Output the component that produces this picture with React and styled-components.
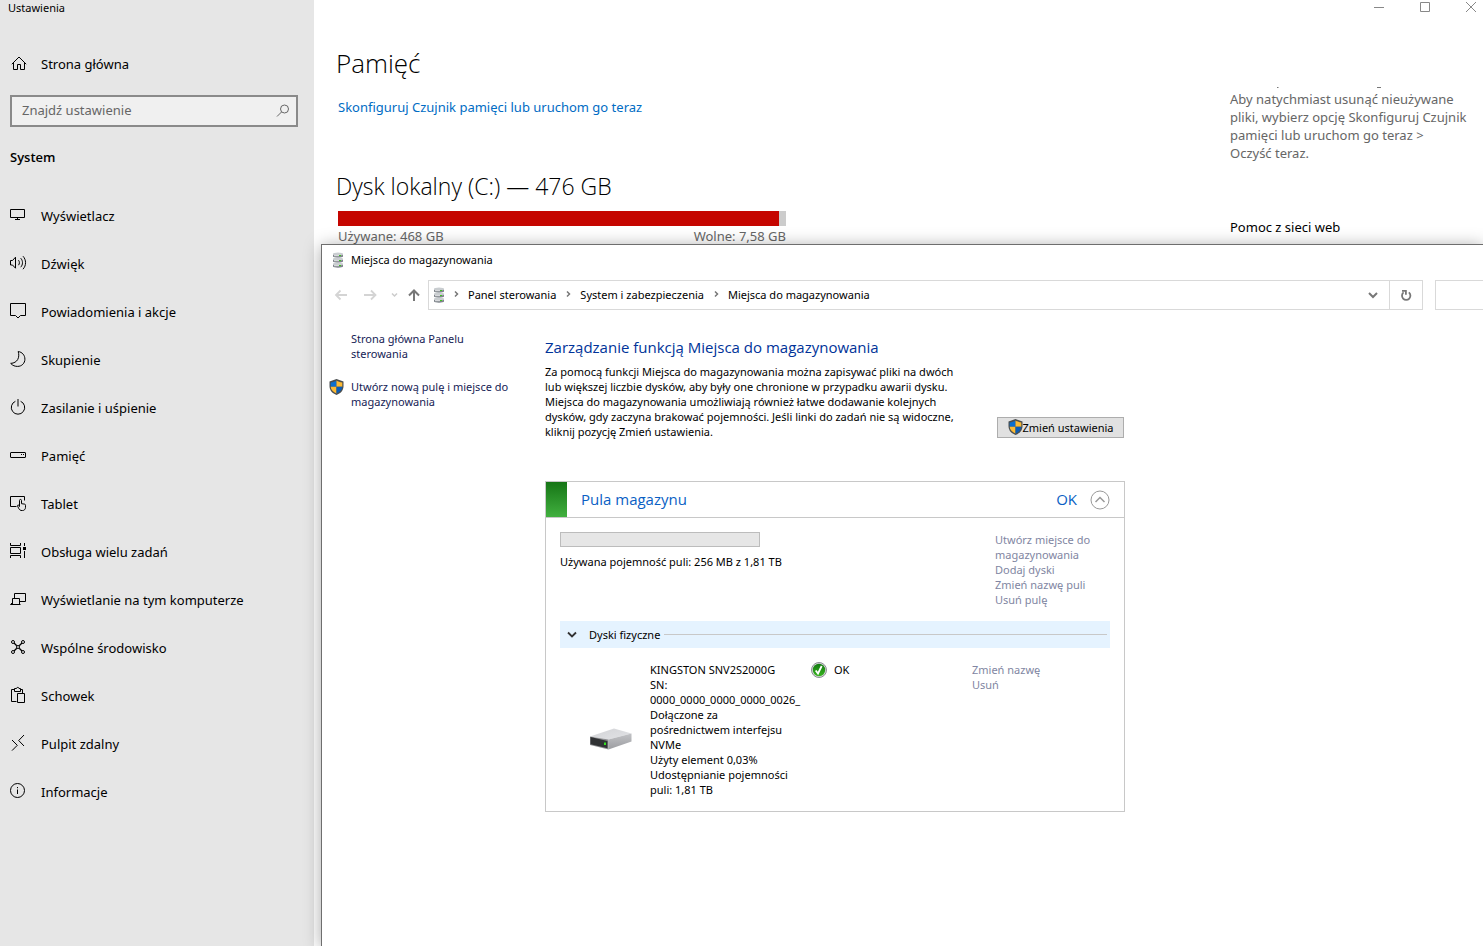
import React from 'react'
import styled, { createGlobalStyle } from 'styled-components'

const GlobalStyle = createGlobalStyle`
  * {
    box-sizing: border-box;
  }

  body {
    margin: 0;
    background: #fff;
    color: #000;
    font-family: 'Noto Sans', 'Open Sans', sans-serif;
    font-size: 12px;
    overflow: hidden;
  }

  h1, h2, h3, p, ul {
    margin: 0;
    padding: 0;
    font-weight: 400;
  }

  h1, h2 {
    font-family: 'Open Sans', 'Noto Sans', sans-serif;
  }

  ul {
    list-style: none;
  }

  a {
    color: inherit;
    text-decoration: none;
  }

  button {
    font: inherit;
    color: inherit;
    padding: 0;
    border: 0;
    background: none;
  }

  svg {
    display: block;
    flex: none;
  }
`

const Desktop = styled.div`
  position: relative;
  display: grid;
  grid-template-columns: 314px 1fr;
  min-height: 100vh;
  overflow: hidden;
`

/* Settings app */

const Sidebar = styled.aside`
  background: #e6e6e6;
  padding: 0 16px 0 10px;
`

const AppTitle = styled.div`
  height: 16px;
  line-height: 16px;
  margin: 0 0 24px -2px;
  font-size: 11px;
`

const NavLink = styled.a`
  display: flex;
  align-items: center;
  gap: 13px;
  height: 48px;
  font-size: 13px;

  svg {
    margin-bottom: 4px;
  }
`

const SearchBox = styled.label`
  display: flex;
  align-items: center;
  height: 32px;
  margin-top: 7px;
  padding: 0 6px 0 10px;
  border: 2px solid #8a8a8a;
  background: #f0f0f0;

  input {
    flex: 1;
    min-width: 0;
    padding: 0 0 2px;
    border: 0;
    outline: 0;
    background: none;
    font: inherit;
    font-size: 13px;
  }

  input::placeholder {
    color: #666;
    opacity: 1;
  }
`

const Category = styled.h2`
  margin: 20px 0 25px;
  font-size: 13px;
  line-height: 20px;
  font-weight: 600;
`

const SettingsMain = styled.main`
  display: grid;
  grid-template-columns: 1fr 253px;
  grid-template-rows: 16px auto;
`

const WindowControls = styled.div`
  grid-column: 1 / -1;
  display: flex;
  justify-content: flex-end;
  gap: 36px;
  padding-right: 7px;

  button {
    display: flex;
    align-items: center;
    height: 14px;
  }
`

const StoragePane = styled.section`
  padding: 28px 22px 0;
`

const PageHeading = styled.h1`
  font-size: 26px;
  line-height: 38px;
  font-weight: 300;
`

const SenseLink = styled.a`
  display: block;
  margin: 15px 0 0 2px;
  font-size: 13px;
  line-height: 20px;
  color: #006cc4;
`

const DiskHeading = styled.h2`
  margin-top: 50px;
  font-size: 23px;
  line-height: 38px;
  font-weight: 300;
`

const DiskUsage = styled.div`
  width: 448px;
  margin: 6px 0 0 2px;
`

const DiskBar = styled.div`
  height: 15px;
  background: #ccc;

  div {
    height: 100%;
    background: #c50500;
  }
`

const DiskLegend = styled.div`
  display: flex;
  justify-content: space-between;
  font-size: 13px;
  line-height: 20px;
  color: #666;
`

const HelpPane = styled.aside`
  padding-top: 70px;
  font-size: 13px;

  p {
    margin-top: 2px;
    padding-right: 12px;
    line-height: 18px;
    color: #666;
  }

  h3 {
    margin-top: 55px;
    font-size: 13px;
    line-height: 20px;
  }
`

/* Storage Spaces window */

const Window = styled.section`
  position: absolute;
  top: 244px;
  left: 321px;
  right: 0;
  bottom: 0;
  display: flex;
  flex-direction: column;
  border: solid #6e6e6e;
  border-width: 1px 0 0 1px;
  background: #fff;
  box-shadow: 0 2px 16px rgba(0, 0, 0, 0.35);
  font-size: 11px;
  line-height: 15px;
`

const TitleBar = styled.header`
  display: flex;
  align-items: center;
  gap: 7px;
  height: 29px;
  padding-left: 10px;
`

const Toolbar = styled.div`
  display: flex;
  align-items: center;
  height: 30px;
  margin-top: 6px;
`

const HistoryButtons = styled.div`
  display: flex;
  align-items: center;
  gap: 13px;
  width: 106px;
  padding-left: 12px;

  button:nth-child(3) {
    margin: 0 -5px 0 -1px;
  }
`

const AddressBar = styled.nav`
  flex: 1;
  display: flex;
  align-items: center;
  height: 30px;
  padding-left: 4px;
  border: 1px solid #d9d9d9;

  ol {
    display: flex;
    align-items: center;
    flex: 1;
    margin: 0;
    padding: 0 0 2px;
    list-style: none;
  }

  li {
    display: flex;
    align-items: center;
    gap: 9px;
    margin-left: 9px;
  }

  li + li {
    margin-left: 10px;
  }
`

const AddressButton = styled.button`
  display: flex;
  align-items: center;
  justify-content: center;
  width: 33px;
  height: 28px;
  border-left: ${(props) => (props.$divided ? '1px solid #d9d9d9' : '0')};
`

const WindowSearch = styled.input`
  width: 48px;
  height: 30px;
  margin-left: 12px;
  border: 1px solid #d9d9d9;
  border-right: 0;
  border-radius: 0;
  outline: 0;
`

const WindowBody = styled.div`
  display: grid;
  grid-template-columns: 223px minmax(0, 580px);
  padding-top: 21px;
`

const TaskLinks = styled.ul`
  padding-left: 7px;
  color: #151c55;

  li {
    display: grid;
    grid-template-columns: 15px 170px;
    gap: 7px;
    margin-bottom: 18px;
  }

  a {
    grid-column: 2;
  }
`

const PaneHeading = styled.h1`
  margin-top: 5px;
  font-size: 15px;
  line-height: 22px;
  color: #039;
`

const Intro = styled.div`
  display: flex;
  justify-content: space-between;
  align-items: flex-end;
  margin-top: 6px;

  p {
    width: 421px;
  }
`

const SettingsButton = styled.button`
  display: flex;
  align-items: center;
  justify-content: center;
  width: 127px;
  height: 21px;
  margin: 0 1px 1px 0;
  border: 1px solid #adadad;
  background: #e1e1e1;

  svg {
    margin-bottom: 2px;
  }
`

const Pool = styled.article`
  margin-top: 42px;
  border: 1px solid #c8c8c8;
`

const PoolHeader = styled.header`
  display: flex;
  align-items: center;
  height: 36px;
  padding-right: 14px;
  border-bottom: 1px solid #c8c8c8;
  font-family: 'Open Sans', 'Noto Sans', sans-serif;
  font-size: 15px;
  color: #0a5fc4;

  &::before {
    content: '';
    width: 21px;
    height: 35px;
    margin-right: 14px;
    background: linear-gradient(#167516, #41b03f);
  }

  h2 {
    flex: 1;
    font-size: 15px;
  }

  button {
    margin-left: 13px;
  }
`

const PoolBody = styled.div`
  padding: 14px;
`

const PoolSummary = styled.div`
  display: grid;
  grid-template-columns: 1fr 115px;
  min-height: 89px;
`

const CapacityBar = styled.div`
  width: 200px;
  height: 15px;
  margin-bottom: 7px;
  border: 1px solid #bcbcbc;
  background: #e6e6e6;
`

const ActionList = styled.ul`
  color: #8186a2;
`

const SectionButton = styled.button`
  display: flex;
  align-items: center;
  width: 100%;
  height: 27px;
  padding: 0 3px 0 7px;
  background: #e5f3ff;

  span {
    margin: 0 4px 0 12px;
  }

  &::after {
    content: '';
    flex: 1;
    height: 1px;
    background: #c8c8c8;
  }
`

const Disk = styled.div`
  display: grid;
  grid-template-columns: 60px 144px 144px 1fr;
  column-gap: 17px;
  margin-top: 14px;
  padding-left: 13px;

  > svg {
    align-self: center;
    justify-self: end;
    margin-top: 18px;
  }
`

const DiskStatus = styled.div`
  display: flex;
  align-items: flex-start;
  gap: 7px;
`

function Icon({ children, width = 18, height = 18, color = '#000', stroke = 1 }) {
  return (
    <svg
      width={width}
      height={height}
      viewBox={`0 0 ${width} ${height}`}
      fill="none"
      stroke={color}
      strokeWidth={stroke}
      aria-hidden="true"
    >
      {children}
    </svg>
  )
}

const homeIcon = (
  <Icon>
    <path d="M1.8 11.2 9 4l7.2 7.2M3.5 9.8v6.7h4v-5h3v5h4V9.8" />
  </Icon>
)

const navItems = [
  {
    label: 'Wyświetlacz',
    icon: <path d="M.5 4.5h14v8H.5zM7.5 12.5v2M5 14.5h5" />,
  },
  {
    label: 'Dźwięk',
    icon: (
      <path d="M.5 7.5h2l3-3.3v11l-3-3.200h-2zM8.5 7.2c1.2 1.500 1.2 3.500 0 5M10.700 5.2c2.4 2.600 2.4 6.400 0 9M13 3.2c3.4 3.700 3.4 9.300 0 13" />
    ),
  },
  {
    label: 'Powiadomienia i akcje',
    icon: <path d="M.5 2.5h15v12h-5L8 17l-2.5-2.5h-5z" />,
  },
  {
    label: 'Skupienie',
    icon: <path d="M8.2 2.5C10 8.5 7.5 14 .7 14.4 2.7 16.7 5 17.4 7.6 17.4c4.2 0 7.3-3.2 7.3-7.2 0-3.9-2.6-7.1-6.7-7.7z" />,
  },
  {
    label: 'Zasilanie i uśpienie',
    icon: <path d="M8 2v7.500M5.400 4.300a6.700 6.700 0 1 0 5.200 0" />,
  },
  {
    label: 'Pamięć',
    icon: (
      <>
        <rect x="0.5" y="7.5" width="15" height="5" rx="0.5" />
        <path d="M11 9.500h1M13 9.500h1" />
      </>
    ),
  },
  {
    label: 'Tablet',
    icon: (
      <>
        <path d="M6.500 13.500h-6v-10h14v4" />
        <path d="M9.500 13.500V7.400c0-1.300 2-1.300 2 0v3.300l3 .4c.7.1 1 .5 1 1.200v2c0 2-1.300 3.300-3.200 3.300-2 0-3-.9-3.700-2.400l-1-2.100c-.5-1.200.9-1.600 1.900-.1z" />
      </>
    ),
  },
  {
    label: 'Obsługa wielu zadań',
    icon: (
      <>
        <path d="M.5 2v2.500h10V2M.5 6.500h10v6H.5zM.5 17v-2.500h10V17M14.500 2v3M14.500 10v7" />
        <path d="M14.500 6v3" strokeWidth="3" />
      </>
    ),
  },
  {
    label: 'Wyświetlanie na tym komputerze',
    icon: <path d="M4.500 9V4.500h11v8H10M2.500 15V9.500h7V15M.5 15.500h10M.5 15.500l2-2" />,
  },
  {
    label: 'Wspólne środowisko',
    icon: (
      <>
        <path d="m4 6 2.800 2.800M12 6 9.200 8.800M4 14l2.800-2.800M12 14l-2.800-2.800" strokeWidth="1.300" />
        <circle cx="3" cy="5" r="1.500" />
        <circle cx="13" cy="5" r="1.500" />
        <circle cx="8" cy="10" r="1.500" />
        <circle cx="3" cy="15" r="1.500" />
        <circle cx="13" cy="15" r="1.500" />
      </>
    ),
  },
  {
    label: 'Schowek',
    icon: (
      <path d="M6.500 16.500h-5v-12h3M10 4.500h2.500V8M4.500 6.500v-3h2c0-1.500 2.500-1.500 2.500 0h1.500v3zM7.500 8.500h7v9h-7z" />
    ),
  },
  {
    label: 'Pulpit zdalny',
    icon: <path d="m2 7 5.300 5.300L2 17.600M14 2 8.700 7.500 14 13" />,
  },
  {
    label: 'Informacje',
    icon: (
      <>
        <circle cx="7.500" cy="9.500" r="7" />
        <path d="M7.500 8.500V13M7.500 6v1.200" />
      </>
    ),
  },
]

function Shield() {
  return (
    <svg width="15" height="16" viewBox="0 0 15 16" aria-hidden="true">
      <path d="M7.500 0 14.500 2.500V7c0 4.500-3 7.500-7 9-4-1.500-7-4.500-7-9V2.500z" fill="#4b4f50" />
      <path d="M7.500 1.500v6.200H1.700V3.400C4 3.200 6 2.500 7.500 1.500z" fill="#0b6fd0" />
      <path d="M7.500 1.500v6.200h5.800V3.400C11 3.200 9 2.500 7.500 1.500z" fill="#fdba33" />
      <path d="M1.700 7.700h5.800v6.800c-3.300-1.300-5.600-3.800-5.800-6.800z" fill="#fdba33" />
      <path d="M13.300 7.700H7.500v6.800c3.300-1.300 5.600-3.800 5.800-6.800z" fill="#0b5cb5" />
    </svg>
  )
}

function DiskStack() {
  return (
    <svg width="12" height="16" viewBox="0 0 12 16" aria-hidden="true">
      {[0, 5, 10].map((y) => (
        <g key={y} transform={`translate(0 ${y})`}>
          <path d="M1 2.500v2c0 1.500 10 1.500 10 0v-2z" fill="#7f848b" />
          <ellipse cx="6" cy="2" rx="5" ry="1.500" fill="#c9cdd0" />
          <path d="M2 3.700h5" stroke="#e4e6e8" />
          <rect x="7" y="3" width="2" height="1" fill="#3cc51f" />
        </g>
      ))}
    </svg>
  )
}

function DriveImage() {
  return (
    <svg width="44" height="24" viewBox="0 0 44 24" aria-hidden="true">
      <defs>
        <linearGradient id="driveTop" x1="0" y1="0" x2="1" y2="1">
          <stop offset="0" stopColor="#d2d3d6" />
          <stop offset="1" stopColor="#e2e3e6" />
        </linearGradient>
        <linearGradient id="driveSide" x1="0" y1="0" x2="0" y2="1">
          <stop offset="0" stopColor="#c2c3c6" />
          <stop offset="1" stopColor="#9c9da1" />
        </linearGradient>
      </defs>
      <path d="M1 9.500 25 1.500l17.500 5-23 6z" fill="url(#driveTop)" />
      <path d="m19.500 12.500 23-6v8l-23 8z" fill="url(#driveSide)" />
      <path d="M1 9.500V18l18.500 4.500v-10z" fill="#8e8f92" />
      <path d="m1.500 10 17 4v7.300l-17-4z" fill="#303234" />
      <path d="M15 15.500h2v2.500h-2z" fill="#35e020" />
    </svg>
  )
}

function OkBadge() {
  return (
    <svg width="16" height="16" viewBox="0 0 16 16" aria-hidden="true">
      <defs>
        <linearGradient id="okFill" x1="0" y1="0" x2="0" y2="1">
          <stop offset="0" stopColor="#137a12" />
          <stop offset="1" stopColor="#36b41d" />
        </linearGradient>
      </defs>
      <circle cx="8" cy="8" r="7.500" fill="#d5d7d8" stroke="#8b8f92" />
      <circle cx="8" cy="8" r="6.200" fill="url(#okFill)" />
      <path d="m4.700 8.500 2.300 3 3.700-7.500" fill="none" stroke="#fff" strokeWidth="1.800" />
    </svg>
  )
}

function Crumb({ children }) {
  return (
    <li>
      <Icon width={5} height={8} color="#777" stroke={1.500}>
        <path d="m1 1.500 2.500 2.500L1 6.500" />
      </Icon>
      <a href="#crumb">{children}</a>
    </li>
  )
}

function SettingsSidebar() {
  return (
    <Sidebar>
      <AppTitle>Ustawienia</AppTitle>
      <NavLink href="#home">
        {homeIcon}
        Strona główna
      </NavLink>
      <SearchBox>
        <input type="text" placeholder="Znajdź ustawienie" aria-label="Znajdź ustawienie" />
        <Icon width={14} height={14} color="#666">
          <circle cx="8.500" cy="5" r="4" />
          <path d="M5.500 8 1 12.500" />
        </Icon>
      </SearchBox>
      <Category>System</Category>
      <nav>
        {navItems.map((item) => (
          <NavLink key={item.label} href="#setting">
            <Icon>{item.icon}</Icon>
            {item.label}
          </NavLink>
        ))}
      </nav>
    </Sidebar>
  )
}

function StorageSettings() {
  const total = 476
  const used = 468.4

  return (
    <SettingsMain>
      <WindowControls>
        <button aria-label="Minimalizuj">
          <Icon width={10} height={10} color="#888">
            <path d="M0 5.500h10" />
          </Icon>
        </button>
        <button aria-label="Maksymalizuj">
          <Icon width={10} height={10} color="#888">
            <path d="M.5.500h9v9h-9z" />
          </Icon>
        </button>
        <button aria-label="Zamknij">
          <Icon width={10} height={10} color="#888">
            <path d="m0 0 10 10M10 0 0 10" />
          </Icon>
        </button>
      </WindowControls>
      <StoragePane>
        <PageHeading>Pamięć</PageHeading>
        <SenseLink href="#sense">Skonfiguruj Czujnik pamięci lub uruchom go teraz</SenseLink>
        <DiskHeading>Dysk lokalny (C:) — 476 GB</DiskHeading>
        <DiskUsage>
          <DiskBar>
            <div style={{ width: `${(used / total) * 100}%` }} />
          </DiskBar>
          <DiskLegend>
            <span>Używane: 468 GB</span>
            <span>Wolne: 7,58 GB</span>
          </DiskLegend>
        </DiskUsage>
      </StoragePane>
      <HelpPane>
        {/* descenders of the line scrolled out of view */}
        <Icon width={240} height={2} color="#777">
          <path d="M47 1.500h1.500M147 1.500h4" />
        </Icon>
        <p>
          Aby natychmiast usunąć nieużywane pliki, wybierz opcję Skonfiguruj Czujnik pamięci lub
          uruchom go teraz &gt;
          <br />
          Oczyść teraz.
        </p>
        <h3>Pomoc z sieci web</h3>
      </HelpPane>
    </SettingsMain>
  )
}

function PhysicalDisk() {
  return (
    <Disk>
      <DriveImage />
      <p>
        KINGSTON SNV2S2000G
        <br />
        SN:
        <br />
        0000_0000_0000_0000_0026_
        <br />
        Dołączone za pośrednictwem interfejsu NVMe
        <br />
        Użyty element 0,03%
        <br />
        Udostępnianie pojemności puli: 1,81 TB
      </p>
      <DiskStatus>
        <OkBadge />
        OK
      </DiskStatus>
      <ActionList>
        <li>
          <a href="#rename-disk">Zmień nazwę</a>
        </li>
        <li>
          <a href="#remove-disk">Usuń</a>
        </li>
      </ActionList>
    </Disk>
  )
}

function StoragePool() {
  return (
    <Pool>
      <PoolHeader>
        <h2>Pula magazynu</h2>
        <span>OK</span>
        <button aria-label="Zwiń pulę">
          <Icon width={20} height={20} color="#999">
            <circle cx="10" cy="10" r="9" />
            <path d="m5.500 12 4.500-4.500 4.500 4.500" strokeWidth="1.500" />
          </Icon>
        </button>
      </PoolHeader>
      <PoolBody>
        <PoolSummary>
          <div>
            <CapacityBar />
            <p>Używana pojemność puli: 256 MB z 1,81 TB</p>
          </div>
          <ActionList>
            <li>
              <a href="#create-space">Utwórz miejsce do magazynowania</a>
            </li>
            <li>
              <a href="#add-disks">Dodaj dyski</a>
            </li>
            <li>
              <a href="#rename-pool">Zmień nazwę puli</a>
            </li>
            <li>
              <a href="#delete-pool">Usuń pulę</a>
            </li>
          </ActionList>
        </PoolSummary>
        <SectionButton>
          <Icon width={10} height={8} color="#333" stroke={1.800}>
            <path d="M1 1.500 5 5.500l4-4" />
          </Icon>
          <span>Dyski fizyczne</span>
        </SectionButton>
        <PhysicalDisk />
      </PoolBody>
    </Pool>
  )
}

function StorageSpacesWindow() {
  return (
    <Window>
      <TitleBar>
        <DiskStack />
        Miejsca do magazynowania
      </TitleBar>
      <Toolbar>
        <HistoryButtons>
          <button aria-label="Wstecz">
            <Icon width={14} height={12} color="#d4d4d4" stroke={1.800}>
              <path d="M13 6H2M6.500 1.500 2 6l4.500 4.500" />
            </Icon>
          </button>
          <button aria-label="Dalej">
            <Icon width={18} height={12} color="#d4d4d4" stroke={1.800}>
              <path d="M3 6h11.500M10 1.500 14.500 6 10 10.500" />
            </Icon>
          </button>
          <button aria-label="Ostatnie lokalizacje">
            <Icon width={8} height={6} color="#ccc" stroke={1.500}>
              <path d="m1 1.500 2.500 2.500L6 1.500" />
            </Icon>
          </button>
          <button aria-label="W górę">
            <Icon width={14} height={14} color="#777" stroke={2}>
              <path d="M7 13V2.500M2 7.500l5-5 5 5" />
            </Icon>
          </button>
        </HistoryButtons>
        <AddressBar>
          <DiskStack />
          <ol>
            <Crumb>Panel sterowania</Crumb>
            <Crumb>System i zabezpieczenia</Crumb>
            <Crumb>Miejsca do magazynowania</Crumb>
          </ol>
          <AddressButton aria-label="Poprzednie lokalizacje">
            <Icon width={10} height={8} color="#777" stroke={2}>
              <path d="m1 2 4 4 4-4" />
            </Icon>
          </AddressButton>
          <AddressButton $divided aria-label="Odśwież">
            <Icon width={12} height={12} color="#777" stroke={1.800}>
              <path d="M8.800 3.400a4.200 4.200 0 1 1-5.200 0M2 1.900h3.900v3.800" />
            </Icon>
          </AddressButton>
        </AddressBar>
        <WindowSearch type="search" aria-label="Wyszukaj" />
      </Toolbar>
      <WindowBody>
        <TaskLinks>
          <li>
            <a href="#panel-home">Strona główna Panelu sterowania</a>
          </li>
          <li>
            <Shield />
            <a href="#create-pool">Utwórz nową pulę i miejsce do magazynowania</a>
          </li>
        </TaskLinks>
        <div>
          <PaneHeading>Zarządzanie funkcją Miejsca do magazynowania</PaneHeading>
          <Intro>
            <p>
              Za pomocą funkcji Miejsca do magazynowania można zapisywać pliki na dwóch lub większej
              liczbie dysków, aby były one chronione w przypadku awarii dysku. Miejsca do
              magazynowania umożliwiają również łatwe dodawanie kolejnych dysków, gdy zaczyna
              brakować pojemności. Jeśli linki do zadań nie są widoczne, kliknij pozycję Zmień
              ustawienia.
            </p>
            <SettingsButton>
              <Shield />
              Zmień ustawienia
            </SettingsButton>
          </Intro>
          <StoragePool />
        </div>
      </WindowBody>
    </Window>
  )
}

export default function App() {
  return (
    <>
      <GlobalStyle />
      <Desktop>
        <SettingsSidebar />
        <StorageSettings />
        <StorageSpacesWindow />
      </Desktop>
    </>
  )
}
